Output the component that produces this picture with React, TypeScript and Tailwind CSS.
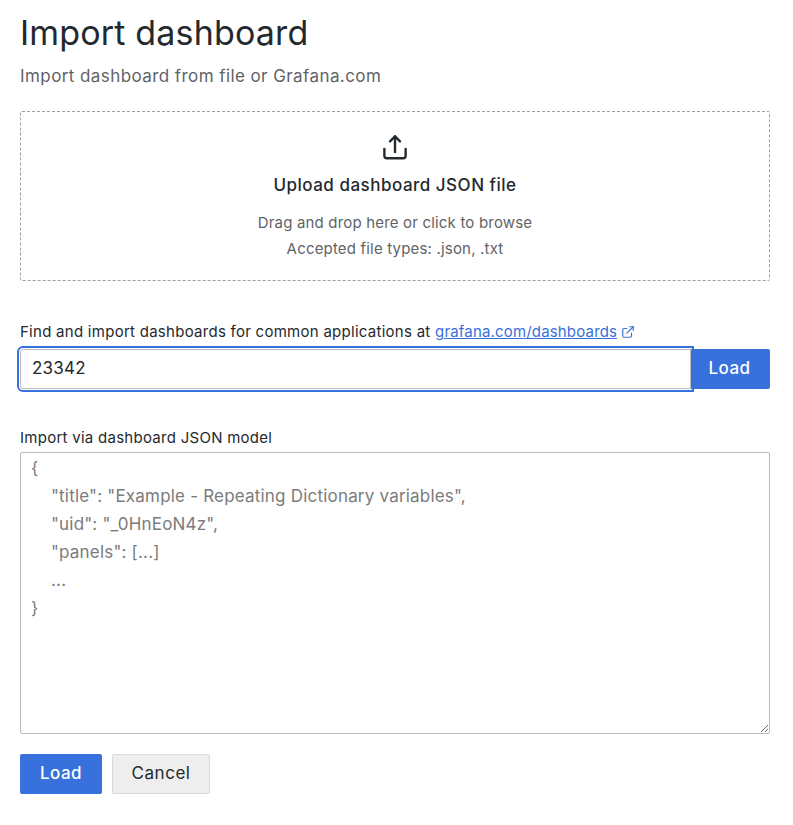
import React from "react";

const placeholder = `{
    "title": "Example - Repeating Dictionary variables",
    "uid": "_0HnEoN4z",
    "panels": [...]
    ...
}`;

export default function App() {
  return (
    <div className="min-h-[825px] bg-white pl-5 pr-[23px] pt-[13px] text-[#24292e] font-['Inter',sans-serif]">
      <h1 className="text-[34px] leading-[40px] font-normal tracking-[0.17px]">Import dashboard</h1>
      <p className="mt-[11px] text-[17px] leading-[24px] font-normal tracking-[0.42px] text-[#5f6368]">Import dashboard from file or Grafana.com</p>
      <div className="mt-[23px] flex h-[170px] flex-col items-center rounded-[2px] border border-dashed border-[#9f9f9f] pt-[20px]">
        <svg width="30" height="30" viewBox="0 0 24 24" fill="none" stroke="#24292e" strokeWidth="1.9" strokeLinecap="round" strokeLinejoin="round">
          <path d="M3.5 13.5v5.5a2 2 0 0 0 2 2h13a2 2 0 0 0 2-2v-5.5" />
          <path d="M12 16V3.5" />
          <path d="M8 7.5l4-4 4 4" />
        </svg>
        <div className="mt-[11px] text-[17px] leading-[24px] font-medium tracking-[0.5px]">Upload dashboard JSON file</div>
        <div className="mt-[13px] text-[15px] leading-[26px] tracking-[0.18px] text-[#5f6368] text-center">
          <div>Drag and drop here or click to browse</div>
          <div>Accepted file types: .json, .txt</div>
        </div>
      </div>
      <label className="mt-[41px] block text-[15px] leading-[20px] font-normal tracking-[0.27px]">
        Find and import dashboards for common applications at{" "}
        <a className="text-[#3871dc] tracking-[0.17px] underline" href="#">grafana.com/dashboards</a>
        <svg className="ml-[4px] inline-block align-[-2px]" width="14" height="14" viewBox="0 0 24 24" fill="none" stroke="#3871dc" strokeWidth="2" strokeLinecap="round" strokeLinejoin="round">
          <path d="M18 14v5a2 2 0 0 1-2 2H5a2 2 0 0 1-2-2V8a2 2 0 0 1 2-2h5" />
          <path d="M15 3h6v6" />
          <path d="M10 14L21 3" />
        </svg>
      </label>
      <div className="mt-[7px] flex h-10">
        <input
          defaultValue="23342"
          className="h-10 min-w-0 flex-1 rounded-l-[3px] border border-[#bdbdbd] bg-white px-[11px] pb-[2px] text-[17px] tracking-[0.2px] text-[#24292e] outline-2 outline-offset-1 outline-[#3871dc] outline-solid"
        />
        <button className="h-10 w-[79px] rounded-r-[2px] bg-[#3871dc] pr-[2px] text-[17px] font-[450] tracking-[0.4px] text-white">Load</button>
      </div>
      <label className="mt-[39px] block text-[15px] leading-[20px] font-normal tracking-[0.27px]">Import via dashboard JSON model</label>
      <textarea
        placeholder={placeholder}
        className="mt-[4px] block h-[282px] w-full rounded-[2px] border border-[#bdbdbd] bg-white px-[10px] py-[1px] text-[17px] leading-[28px] tracking-[0.2px] placeholder:text-[#7b7b7b]"
      />
      <div className="mt-5 flex gap-[10px]">
        <button className="h-10 w-[82px] rounded-[2px] bg-[#3871dc] text-[17px] font-[450] tracking-[0.4px] text-white">Load</button>
        <button className="h-10 w-[98px] rounded-[2px] border border-[#d9d9d9] bg-[#eeeeee] text-[17px] font-normal tracking-[0.55px] text-[#24292e]">Cancel</button>
      </div>
    </div>
  );
}
